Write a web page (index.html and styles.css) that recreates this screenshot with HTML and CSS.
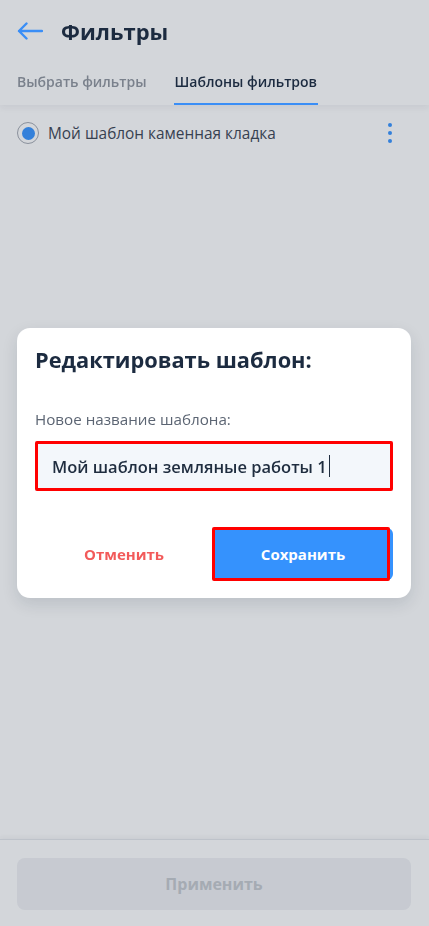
FILE: index.html
```html
<!DOCTYPE html>
<html lang="ru">
<head>
  <meta charset="UTF-8">
  <title>Фильтры</title>
  <link rel="stylesheet" href="styles.css">
</head>
<body>

  <div class="screen">
    <header class="top">
      <div class="title-row">
        <svg class="back" width="26" height="18" viewBox="0 0 26 18">
          <path d="M25 9H2M9.5 1.5L2 9l7.5 7.5" fill="none" stroke="#3a8ef6" stroke-width="2.4" stroke-linecap="round" stroke-linejoin="round"/>
        </svg>
        <h1>Фильтры</h1>
      </div>
      <nav class="tabs">
        <span class="tab">Выбрать фильтры</span>
        <span class="tab active">Шаблоны фильтров</span>
      </nav>
    </header>

    <div class="list">
      <div class="template">
        <span class="radio"><span class="dot"></span></span>
        <span class="name">Мой шаблон каменная кладка</span>
        <span class="more"><i></i><i></i><i></i></span>
      </div>
    </div>

    <footer class="bottom">
      <button class="apply" disabled>Применить</button>
    </footer>
  </div>

  <div class="overlay"></div>

  <div class="modal-wrap">
    <div class="modal">
      <h2>Редактировать шаблон:</h2>
      <label class="field-label" for="tpl-name">Новое название шаблона:</label>
      <div class="field mark">
        <span id="tpl-name" class="field-value">Мой шаблон земляные работы 1</span><span class="caret"></span>
      </div>
      <div class="actions">
        <button class="cancel">Отменить</button>
        <button class="save mark">Сохранить</button>
      </div>
    </div>
  </div>

</body>
</html>
```

FILE: styles.css
```css
* {
  box-sizing: border-box;
}

body {
  margin: 0;
  width: 429px;
  height: 926px;
  overflow: hidden;
  background: #ffffff;
  font-family: "Open Sans", "Noto Sans", sans-serif;
  color: #1c2b40;
}

.screen {
  height: 926px;
  display: flex;
  flex-direction: column;
}

.top {
  padding: 0 17px;
  box-shadow: 0 3px 6px rgba(30, 40, 60, 0.06);
  position: relative;
  z-index: 1;
}

.title-row {
  height: 62px;
  display: flex;
  align-items: center;
  gap: 18px;
}

.title-row h1 {
  margin: 0;
  font-size: 22px;
  font-weight: 700;
  color: #1c2b40;
}

.tabs {
  display: flex;
  gap: 28px;
  height: 43px;
}

.tab {
  display: flex;
  align-items: center;
  font-size: 14px;
  font-weight: 600;
  color: #7a818c;
  border-bottom: 2px solid transparent;
  padding: 0 0 3px;
}

.tab.active {
  color: #1c2b40;
  border-bottom-color: #3a8ef6;
  margin-left: -1px;
  padding: 0 1px 3px;
}

.list {
  flex: 1;
}

.template {
  display: flex;
  align-items: center;
  padding: 0 17px;
  height: 56px;
}

.radio {
  width: 22px;
  height: 22px;
  border-radius: 50%;
  border: 1px solid #a6abb4;
  display: flex;
  align-items: center;
  justify-content: center;
  margin-right: 9px;
}

.radio .dot {
  width: 13px;
  height: 13px;
  border-radius: 50%;
  background: #3a96ff;
}

.name {
  flex: 1;
  font-size: 15.4px;
  color: #3f4856;
}

.more {
  display: flex;
  flex-direction: column;
  gap: 4px;
  margin-right: 20px;
}

.more i {
  width: 4px;
  height: 4px;
  border-radius: 50%;
  background: #3a96ff;
}

.bottom {
  border-top: 1px solid #e6e8ec;
  box-shadow: 0 -2px 4px rgba(30, 40, 60, 0.05);
  padding: 18px 18px 16px 17px;
}

.apply {
  width: 100%;
  height: 52px;
  border: none;
  border-radius: 8px;
  background: #f0f1f4;
  color: #c7cacf;
  font-family: inherit;
  font-size: 16px;
  font-weight: 700;
}

.overlay {
  position: fixed;
  inset: 0;
  background: rgba(20, 35, 60, 0.19);
}

.modal-wrap {
  position: fixed;
  inset: 0;
  padding: 328px 18px 0 17px;
}

.modal {
  background: #ffffff;
  border-radius: 13px;
  padding: 16px 18px;
  height: 270px;
  box-shadow: 0 6px 16px rgba(20, 30, 50, 0.12);
}

.modal h2 {
  margin: 0;
  font-size: 21.8px;
  font-weight: 700;
  color: #1c2b40;
  line-height: 32px;
}

.field-label {
  display: block;
  margin-top: 33px;
  font-size: 15.2px;
  color: #5c6573;
}

.field {
  margin-top: 12px;
  height: 50px;
  width: 358px;
  background: #f3f7fb;
  display: flex;
  align-items: center;
  padding-left: 17px;
}

.field-value {
  font-size: 16.5px;
  font-weight: 600;
  color: #1f2d3f;
}

.caret {
  width: 1px;
  height: 22px;
  background: #1f2d3f;
  margin-left: 2px;
}

.actions {
  display: flex;
  align-items: center;
  margin-top: 37px;
}

.cancel {
  width: 178px;
  height: 52px;
  border: none;
  background: none;
  color: #f25a5a;
  font-family: inherit;
  font-size: 15px;
  font-weight: 700;
}

.save {
  width: 180px;
  height: 52px;
  border: none;
  border-radius: 6px;
  background: #3592fd;
  color: #ffffff;
  font-family: inherit;
  font-size: 15px;
  font-weight: 700;
}

/* red highlight frames from the annotated screenshot */
.mark {
  position: relative;
}

.mark::after {
  content: "";
  position: absolute;
  inset: 0;
  border: 3px solid #ff0000;
  border-radius: 2px;
  pointer-events: none;
}

.save.mark::after {
  inset: -1px 3px -1px -1px;
}
```
